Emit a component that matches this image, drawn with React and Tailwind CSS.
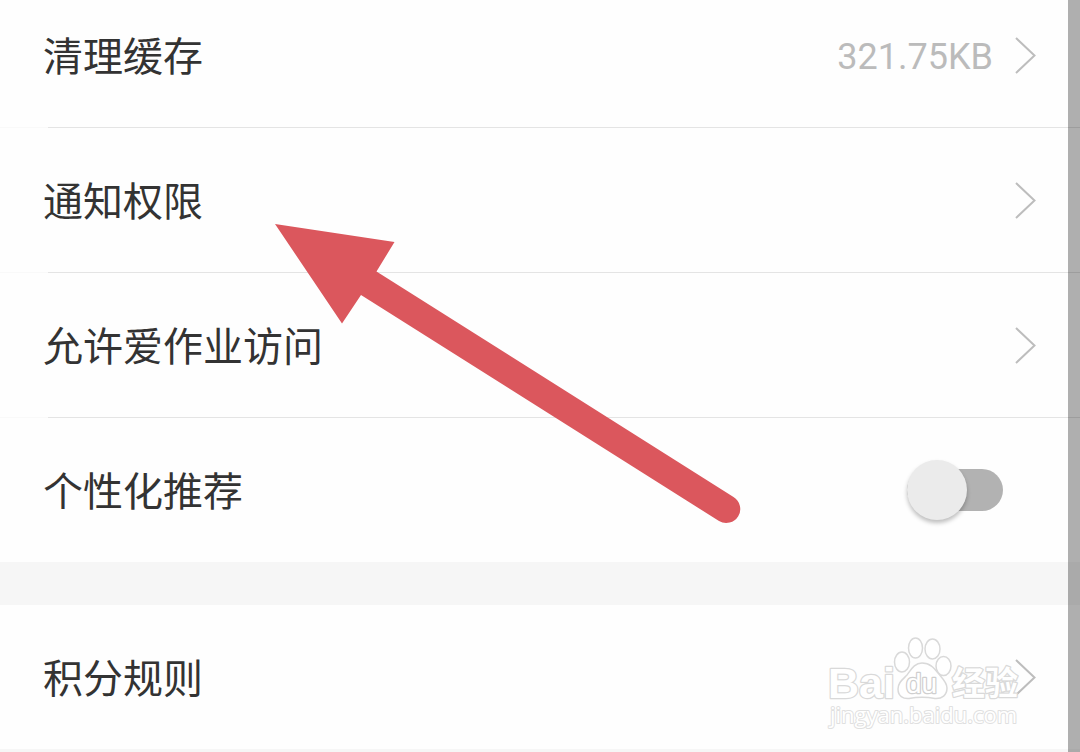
import { useState } from "react";

function Chevron() {
  return (
    <svg className="h-10 w-6 shrink-0" viewBox="0 0 24 40" fill="none" stroke="#bdbdbd" strokeWidth="2" aria-hidden="true">
      <path d="M3 3 L21.500 20.500 L3 38" />
    </svg>
  );
}

function LinkRow({ label, value, divided = true }) {
  return (
    <li className={divided ? "border-b border-[#f9f9f9]" : ""}>
      <a href="#" className="relative flex h-36 items-center justify-between px-[43px]">
        <span className="pb-0.5">{label}</span>
        <span className="flex items-center gap-5 font-[Roboto,sans-serif] text-4xl text-[#bbbbbb]">
          {value && <span className="pt-1">{value}</span>}
          <Chevron />
        </span>
        {divided && <span className="absolute right-0 -bottom-px left-12 h-px bg-[#e4e4e4]" />}
      </a>
    </li>
  );
}

function ToggleRow({ label }) {
  const [on, setOn] = useState(false);
  return (
    <li>
      <label className="relative flex h-36 items-center justify-between pr-[77px] pl-[43px]">
        <span className="pb-0.5">{label}</span>
        <input type="checkbox" role="switch" className="peer sr-only" checked={on} onChange={(e) => setOn(e.target.checked)} />
        <span className="flex h-[42px] w-24 items-center rounded-full bg-[#b2b2b2] peer-checked:justify-end">
          <span className="size-[60px] rounded-full bg-[#ebebeb] shadow-[0_3px_4px_rgba(0,0,0,0.25)]" />
        </span>
      </label>
    </li>
  );
}

function Arrow() {
  return (
    <svg className="pointer-events-none absolute top-[223px] left-[275px] h-[302px] w-[468px]" viewBox="275 223 468 302" aria-hidden="true">
      <path d="M275 224 L394.500 242 L376.500 271.500 L733.500 497 A14 14 0 0 1 719 521 L361 295 L342 323.500 Z" fill="#db575d" />
    </svg>
  );
}

function Watermark() {
  return (
    <svg
      className="pointer-events-none absolute right-[52px] bottom-5 h-[100px] w-[208px]"
      viewBox="820 632 208 100"
      fill="#ffffff"
      stroke="#d9d9d9"
      strokeWidth="1.5"
      strokeLinejoin="round"
      aria-hidden="true"
    >
      <g fontWeight="bold" strokeWidth="2.5" style={{ paintOrder: "stroke" }}>
        <text x="828" y="697" fontSize="43" fontFamily="'Liberation Sans', sans-serif">Bai</text>
        <text x="952" y="694" fontSize="33" fontFamily="'Noto Sans CJK SC', sans-serif">经验</text>
      </g>
      <ellipse cx="902" cy="661" rx="7.500" ry="10" />
      <ellipse cx="915.500" cy="647" rx="7" ry="10" />
      <ellipse cx="932.500" cy="648" rx="7.500" ry="10" />
      <ellipse cx="943.500" cy="665" rx="7.500" ry="9.500" />
      <path d="M922 662 C914 662 911 669 907 674 C902 679 898 682 898 688 C898 695 903 698 909 697.500 C917 696 927 696 935 697.500 C942 698 947 694 947 687 C947 681 942 677 938 672 C934 667 930 662 922 662 Z" />
      <g style={{ paintOrder: "stroke" }}>
        <text x="906" y="692" fontSize="28" fontFamily="'Liberation Sans', sans-serif" stroke="#cfcfcf" strokeWidth="2.5">du</text>
        <text x="830" y="722" fontSize="22" fontFamily="'Open Sans', sans-serif" fontWeight="500" stroke="#e0e0e0" strokeWidth="2">jingyan.baidu.com</text>
      </g>
    </svg>
  );
}

export default function App() {
  return (
    <main className="relative overflow-hidden bg-[#fefefe] font-['Noto_Sans_CJK_SC',sans-serif] text-[40px] leading-none text-[#333333]">
      <ul className="-mt-[17px]">
        <LinkRow label="清理缓存" value="321.75KB" />
        <LinkRow label="通知权限" />
        <LinkRow label="允许爱作业访问" />
        <ToggleRow label="个性化推荐" />
      </ul>
      <div className="h-[43px] bg-[#f6f6f6]" />
      <ul>
        <LinkRow label="积分规则" divided={false} />
      </ul>
      <div className="h-1 bg-[#f6f6f6]" />
      <Arrow />
      <Watermark />
      <div className="pointer-events-none absolute inset-y-0 right-0 w-3 bg-black/31" />
    </main>
  );
}
